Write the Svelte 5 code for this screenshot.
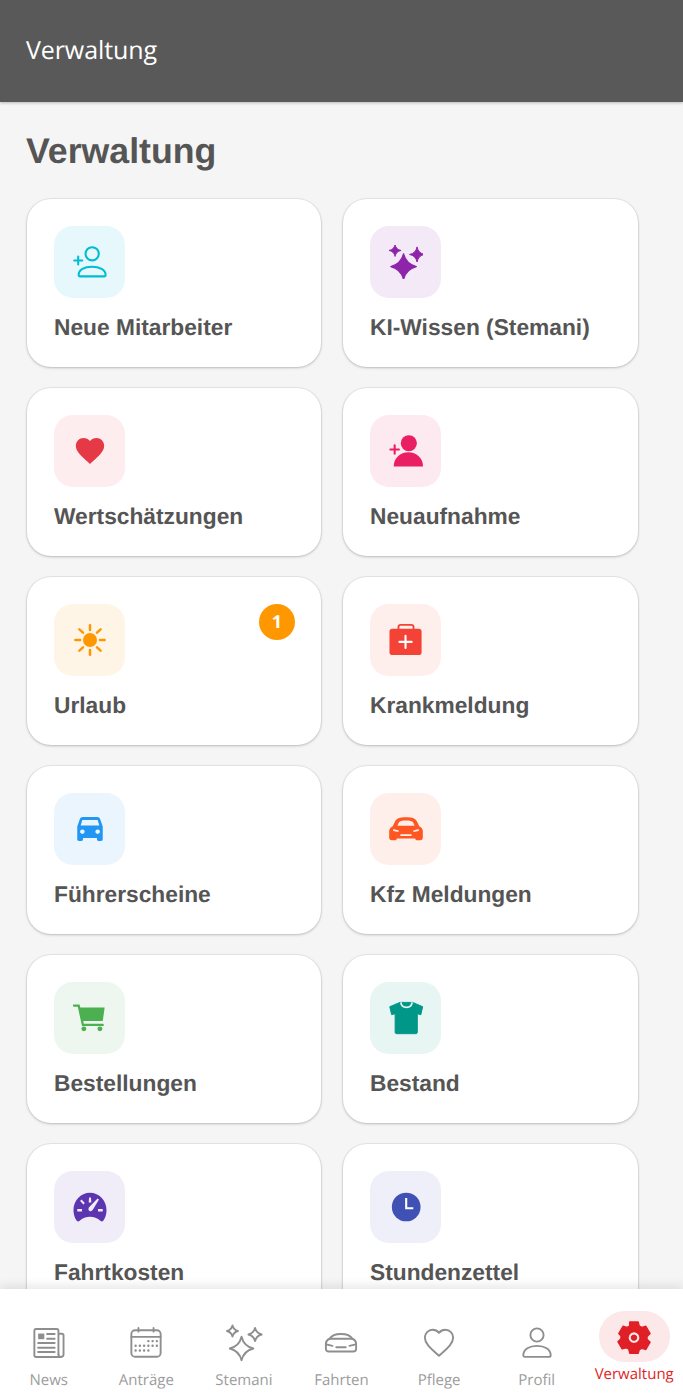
<script>
  const cards = [
    { name: 'Neue Mitarbeiter', icon: 'personAddLine', color: '#00bcd4', bg: '#e6f8fb' },
    { name: 'KI-Wissen (Stemani)', icon: 'sparkle', color: '#8e24aa', bg: '#f4e9f7' },
    { name: 'Wertschätzungen', icon: 'heart', color: '#e53945', bg: '#fdedef' },
    { name: 'Neuaufnahme', icon: 'personAdd', color: '#e91e63', bg: '#fde9f0' },
    { name: 'Urlaub', icon: 'sun', color: '#ff9800', bg: '#fff5e6', badge: 1 },
    { name: 'Krankmeldung', icon: 'kit', color: '#f44336', bg: '#feeeec' },
    { name: 'Führerscheine', icon: 'car', color: '#2196f3', bg: '#ebf5fe' },
    { name: 'Kfz Meldungen', icon: 'sportcar', color: '#ff5722', bg: '#ffefea' },
    { name: 'Bestellungen', icon: 'cart', color: '#4caf50', bg: '#eef7ef' },
    { name: 'Bestand', icon: 'shirt', color: '#009688', bg: '#e7f5f3' },
    { name: 'Fahrtkosten', icon: 'gauge', color: '#5e35b1', bg: '#f0ecf8' },
    { name: 'Stundenzettel', icon: 'clock', color: '#3f51b5', bg: '#eeeff9' }
  ];
  const tabs = [
    { name: 'News', icon: 'news' },
    { name: 'Anträge', icon: 'calendar' },
    { name: 'Stemani', icon: 'stars' },
    { name: 'Fahrten', icon: 'carLine' },
    { name: 'Pflege', icon: 'heartLine' },
    { name: 'Profil', icon: 'person' },
    { name: 'Verwaltung', icon: 'gear', active: true }
  ];

  const heartPath = 'M12 21.35l-1.45-1.32C5.4 15.36 2 12.28 2 8.5 2 5.42 4.42 3 7.5 3c1.74 0 3.41.81 4.5 2.09C13.09 3.81 14.76 3 16.5 3 19.58 3 22 5.42 22 8.5c0 3.78-3.4 6.86-8.55 11.54L12 21.35z';

  // four pointed star, k pulls the sides towards the centre
  const star = (cx, cy, h, k = 0.22) => {
    const c = h * k;
    return `M${cx} ${cy - h}Q${cx + c} ${cy - c} ${cx + h} ${cy}Q${cx + c} ${cy + c} ${cx} ${cy + h}Q${cx - c} ${cy + c} ${cx - h} ${cy}Q${cx - c} ${cy - c} ${cx} ${cy - h}z`;
  };
</script>

{#snippet cardIcon(name, color)}
  <svg class="card-svg" viewBox="0 0 36 36" fill={color} style="color:{color}">
    {#if name === 'personAddLine'}
      <g fill="none" stroke="currentColor" stroke-width="2.2" stroke-linecap="round" stroke-linejoin="round">
        <circle cx="20.300" cy="9.300" r="7" />
        <path d="M6 31.500c0-5.500 6-8.500 14-8.500s14.500 3 14.500 8.500c0 1-.6 1.700-1.500 1.700H7.500c-.9 0-1.500-.7-1.500-1.700z" />
        <path d="M1.300 16.400h8.500M5.500 12.200v8.500" />
      </g>
    {:else if name === 'sparkle'}
      <path d={star(15.4, 22.8, 13.5, 0.2)} stroke="currentColor" stroke-width="1.400" stroke-linejoin="round" />
      <path d={star(6.400, 5.800, 6.400, 0.16)} stroke="currentColor" stroke-width=".9" stroke-linejoin="round" />
      <path d={star(29.700, 10, 8, 0.16)} stroke="currentColor" stroke-width="1" stroke-linejoin="round" />
    {:else if name === 'heart'}
      <path d={heartPath} transform="scale(1.5) translate(0 -.2)" />
    {:else if name === 'personAdd'}
      <circle cx="21" cy="9.800" r="8.500" />
      <path d="M5 34.400c0-9 7-15 15.500-15S36 25.400 36 34.400z" />
      <path d="M1.500 16.400h9M6 11.900v9" fill="none" stroke="currentColor" stroke-width="2.200" stroke-linecap="round" />
    {:else if name === 'sun'}
      <circle cx="18" cy="18" r="7.400" />
      <path d="M18 2.500v5M18 28.500v5M2.500 18h5M28.500 18h5M6.800 6.800l3.800 3.400M25.400 25.800l3.800 3.400M6.800 29.200l3.800-3.400M25.400 10.200l3.800-3.400" fill="none" stroke="currentColor" stroke-width="2.700" stroke-linecap="round" />
    {:else if name === 'kit'}
      <path d="M10 7V4.500C10 3 11 2 12.500 2h11C25 2 26 3 26 4.500V7" fill="none" stroke="currentColor" stroke-width="2" />
      <rect x=".5" y="6" width="34" height="28" rx="3" />
      <path d="M17.500 13.500v13M11 20h13" fill="none" stroke="#fff" stroke-width="2.200" stroke-linecap="round" />
    {:else if name === 'car'}
      <path transform="translate(18 18) scale(.9) translate(-18 -18)" fill-rule="evenodd" d="M6 6.500C6.500 5 8 4 9.500 4h17c1.500 0 3 1 3.500 2.500L33 15v15c0 1-.7 2-2 2h-3c-1 0-1.800-1-1.800-2v-1.500H9.800V30c0 1-.8 2-1.800 2H5c-1.300 0-2-1-2-2V15zM7 14h22l-2-6.500H9z M9 18.500a2.700 2.700 0 1 0 .01 0zM27 18.500a2.700 2.700 0 1 0 .01 0z" />
    {:else if name === 'sportcar'}
      <path transform="translate(18 18) scale(1.08 1) translate(-18 -18)" fill-rule="evenodd" d="M7 10.500C8.500 7 11.500 5.500 18 5.500s9.500 1.500 11 5L31 15c2.200 1 3.500 3 3.500 5.500V27c0 .8-.5 3-2.500 3h-3c-1.200 0-2-1-2-2H9c0 1-.8 2-2 2H4c-2 0-2.500-2.200-2.500-3v-6.500C1.500 18 2.800 16 5 15zM9.500 14.500h17l-1.500-3.500C24 9.500 22 9 18 9s-6 .5-7 2zM5.500 18l5.500 1.500-.5 1.700-5-1zM30.500 18l-5.500 1.500.5 1.700 5-1zM12.500 23.500h11v2h-11z" />
    {:else if name === 'cart'}
      <path d="M6.500 7h27l-2 14.200H10z" />
      <path d="M1 4.800h5l4.500 20.500H31.500" fill="none" stroke="currentColor" stroke-width="2.400" stroke-linecap="round" />
      <circle cx="11.500" cy="29.500" r="2.600" />
      <circle cx="28.500" cy="29.500" r="2.600" />
    {:else if name === 'shirt'}
      <path d="M11.500 1.500 .8 6l2 8.500 3.700-1V33c0 1 .6 1.600 1.500 1.600h20.500c.9 0 1.500-.6 1.500-1.600V13.500l3.700 1 2-8.500L25 1.500z" stroke="currentColor" stroke-linejoin="round" />
      <path d="M12.500 1.500c.8 7 11.200 7 12 0" fill="none" stroke="#e7f5f3" stroke-width="1.800" />
    {:else if name === 'gauge'}
      <path transform="translate(0 .8) scale(1 1.08)" fill-rule="evenodd" d="M18 2C8 2 .5 10 .5 19c0 4 1.500 8 3.500 10.500C4.800 30.500 6 30.500 7 29.500 10 27 14 25.500 18 25.500s8 1.500 11 4c1 1 2.200 1 3 0 2-2.500 3.500-6.500 3.500-10.500C35.500 10 28 2 18 2zM17 6.500h2l.4 5h-2.800zM7.500 10l1.500-1.500 3.500 3.500-1.500 1.500zM4.500 18h5v2.400h-5zM26.500 18h5v2.400h-5zM26 7.500l1.500 1-6 9.500c-.8 1.500-2.200 2.500-3.700 2-1.500-.7-1.800-2.400-1-3.600z" />
    {:else if name === 'clock'}
      <circle cx="18.200" cy="18" r="15.200" />
      <path d="M18.200 8.500v10.800h7.500" fill="none" stroke="#fff" stroke-width="2.200" />
    {/if}
  </svg>
{/snippet}

{#snippet tabIcon(name)}
  <svg class="tab-svg" viewBox="0 0 36 36" fill="none" stroke="currentColor" stroke-width="2" stroke-linecap="round" stroke-linejoin="round">
    {#if name === 'news'}
      <path d="M28 30V5c0-1-.8-1.800-1.800-1.800H4.300C3.300 3.200 2.500 4 2.500 5v26c0 1 .8 1.800 1.800 1.800h26.200c1.600 0 2.900-1.200 2.900-2.800V10c0-1-.8-1.800-1.800-1.800H28" />
      <path d="M28 30c0 1.600 1.200 2.800 2.500 2.800" />
      <rect x="6.500" y="8" width="6.500" height="6" fill="currentColor" stroke="none" />
      <path d="M16 8.500h8M16 13.500h8M6.500 18h17.500M6.500 23h17.500M6.500 27.500h17.500" />
    {:else if name === 'calendar'}
      <rect x="2.500" y="4.500" width="31" height="28" rx="4" />
      <path d="M2.500 11.500h31M10 2v4M26 2v4" />
      <path d="M20.500 16h.01M25 16h.01M29.500 16h.01M7 21h.01M11.500 21h.01M16 21h.01M20.500 21h.01M25 21h.01M29.500 21h.01M7 26h.01M11.500 26h.01M16 26h.01M20.500 26h.01" stroke-width="2.600" />
    {:else if name === 'stars'}
      <path d={star(15.400, 23.800, 12.500, 0.2)} />
      <path d={star(5.800, 5.300, 5.800, 0.2)} />
      <path d={star(29.700, 9, 7, 0.2)} />
    {:else if name === 'carLine'}
      <path d="M2 24v-5c0-2.500 1.500-4.500 4-5.500 2-3.500 6-5 12-5s10 1.500 12 5c2.500 1 4 3 4 5.500v5c0 1.800-1.200 3-3 3H5c-1.800 0-3-1.200-3-3z" />
      <path d="M6 13.500h24M2.500 19.500 9 21M33.500 19.500 27 21M13 22.500h10" />
    {:else if name === 'heartLine'}
      <path d={heartPath} transform="scale(1.5) translate(0 -.3)" stroke-width="1.350" />
    {:else if name === 'person'}
      <circle cx="18" cy="9.500" r="7" />
      <path d="M3.500 31c0-6.500 6.500-10 14.500-10s14.500 3.500 14.500 10c0 1-.7 1.700-1.700 1.700H5.200c-1 0-1.700-.7-1.700-1.700z" />
    {:else if name === 'gear'}
      <path fill="currentColor" stroke-width="1.500" fill-rule="evenodd" d="M13 2h10l1.200 4.800 3 1.700 4.800-1.400 5 8.600-3.600 3.400v3.400l3.600 3.400-5 8.600-4.800-1.400-3 1.700L23 39H13l-1.200-4.800-3-1.700-4.800 1.400-5-8.600 3.600-3.400v-3.400L0 15.700l5-8.600 4.800 1.400 3-1.700zM18 13.500a7 7 0 1 0 .01 0zM18 17.500a3 3 0 1 1-.01 0z" transform="translate(1.800 .2) scale(.9)" />
    {/if}
  </svg>
{/snippet}

<div class="screen">
  <header class="topbar">Verwaltung</header>

  <main class="content">
    <h1>Verwaltung</h1>
    <div class="grid">
      {#each cards as card}
        <div class="card">
          <div class="icon-box" style="background:{card.bg}">
            {@render cardIcon(card.icon, card.color)}
          </div>
          <span class="label">{card.name}</span>
          {#if card.badge}
            <span class="badge">{card.badge}</span>
          {/if}
        </div>
      {/each}
    </div>
  </main>

  <nav class="tabs">
    {#each tabs as tab}
      <div class="tab" class:active={tab.active}>
        <div class="tab-icon">{@render tabIcon(tab.icon)}</div>
        <span>{tab.name}</span>
      </div>
    {/each}
  </nav>
</div>

<style>
  :global(body) {
    margin: 0;
    background: #f5f5f5;
  }

  .screen {
    height: 1400px;
    display: flex;
    flex-direction: column;
    overflow: hidden;
    background: #f5f5f5;
    text-rendering: geometricPrecision;
  }

  .topbar {
    height: 102px;
    flex: none;
    box-sizing: border-box;
    padding: 32px 26px 0;
    background: #595959;
    color: #fff;
    font-family: 'Open Sans', sans-serif;
    font-size: 25px;
    line-height: 36px;
    letter-spacing: -0.1px;
    box-shadow: 0 1px 3px rgba(0, 0, 0, 0.25);
    z-index: 2;
  }

  .content {
    flex: 1;
    min-height: 0;
    overflow: hidden;
    padding: 0 45px 0 27px;
  }

  h1 {
    margin: 28px 0 26px -1px;
    color: #555;
    font-family: 'Liberation Sans', Arial, sans-serif;
    font-size: 35.7px;
    line-height: 43px;
    font-weight: 700;
  }

  .grid {
    display: grid;
    grid-template-columns: 294px 295px;
    gap: 21px 22px;
  }

  .card {
    position: relative;
    height: 168px;
    box-sizing: border-box;
    padding: 27px;
    background: #fff;
    border-radius: 24px;
    box-shadow: 0 0 0 1px rgba(0, 0, 0, 0.05), 0 1px 3px rgba(0, 0, 0, 0.2);
  }

  .icon-box {
    width: 71px;
    height: 72px;
    border-radius: 19px;
    display: flex;
    align-items: center;
    justify-content: center;
  }

  .card-svg {
    width: 34px;
    height: 34px;
  }

  .label {
    display: block;
    margin-top: 15px;
    color: #555;
    font-family: 'Liberation Sans', Arial, sans-serif;
    font-size: 22.75px;
    line-height: 28px;
    font-weight: 700;
    white-space: nowrap;
  }

  .badge {
    position: absolute;
    top: 27px;
    right: 26px;
    width: 36px;
    height: 36px;
    border-radius: 50%;
    background: #ff9800;
    color: #fff;
    font-family: 'Open Sans', sans-serif;
    font-size: 18px;
    font-weight: 700;
    line-height: 36px;
    text-align: center;
  }

  .tabs {
    height: 111px;
    flex: none;
    display: grid;
    grid-template-columns: repeat(7, 1fr);
    background: #fff;
    box-shadow: 0 -3px 10px rgba(0, 0, 0, 0.1);
    z-index: 2;
  }

  .tab {
    display: flex;
    flex-direction: column;
    align-items: center;
    padding-top: 37px;
    color: #8e8e8e;
    font-family: 'Open Sans', sans-serif;
    font-size: 15px;
    line-height: 20px;
  }

  .tab span {
    margin-top: 10px;
    white-space: nowrap;
    color: #9c9c9c;
  }

  .tab-icon {
    display: flex;
    align-items: center;
    justify-content: center;
    height: 34px;
  }

  .tab-svg {
    width: 34px;
    height: 34px;
    overflow: visible;
  }

  .tab.active {
    padding-top: 22px;
    color: #e01f26;
  }

  .tab.active .tab-icon {
    width: 71px;
    height: 51px;
    border-radius: 26px;
    background: #fce8e9;
  }

  .tab.active span {
    margin-top: 2px;
    color: #e01f26;
  }
</style>
